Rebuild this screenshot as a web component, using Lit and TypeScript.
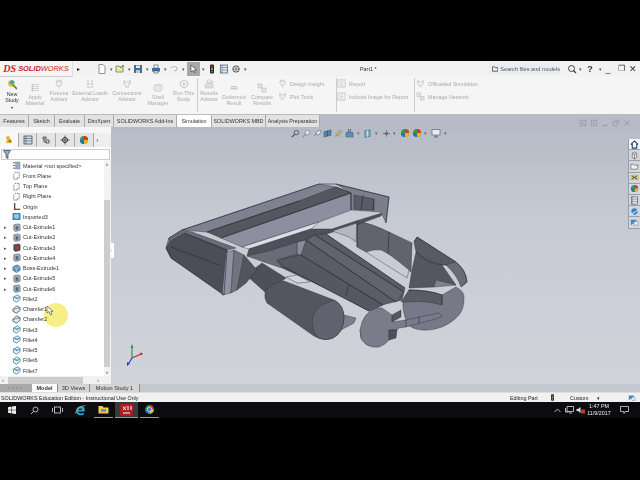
import { LitElement, html, css, svg } from 'lit';
import { customElement } from 'lit/decorators.js';

// small glyphs, all on a 10x10 box
const glyph: Record<string, any> = {
  plane: svg`<path d="M3 1.5h5v6H6M2 3v6h4V7" fill="none" stroke="#555" stroke-width=".8" stroke-dasharray="1.4 .6"/>`,
  origin: svg`<path d="M3 1v7h6" fill="none" stroke="#222" stroke-width="1.2"/><circle cx="3" cy="8" r="1" fill="#a33"/>`,
  material: svg`<path d="M1 2h3M1 5h3M1 8h3" stroke="#666"/><path d="M4 1h5v2H4zM4 4h5v2H4zM4 7h5v2H4z" fill="#8fb3c9" stroke="#667" stroke-width=".4"/>`,
  imported: svg`<rect x=".5" y="1" width="9" height="8" rx="1" fill="#3f84b5"/><path d="M2 3l3-1 3 1v3l-3 2-3-2z" fill="#9cc6de"/>`,
  cut: svg`<path d="M2 2l5-1 2 1v6l-5 1.5L2 8z" fill="#a9b4bd" stroke="#445" stroke-width=".6"/><path d="M4 3.5h3v4H4z" fill="#4b6a80"/>`,
  cutdark: svg`<path d="M2 2l5-1 2 1v6l-5 1.5L2 8z" fill="#555" stroke="#222" stroke-width=".6"/><path d="M4 3.5h3v4H4z" fill="#b33"/>`,
  boss: svg`<path d="M1 3l5-2 3 2v4l-4 2.5L1 7z" fill="#5e9dc2" stroke="#345" stroke-width=".6"/><path d="M1 3l4 2 4-2M5 5v4" stroke="#cfe3ee" stroke-width=".5" fill="none"/>`,
  fillet: svg`<path d="M1.5 3.5L6 1l3 2v3L5 9 1.5 7z" fill="#e9f2f6" stroke="#2f6d8c" stroke-width=".8"/><path d="M2 3.5L5.5 5.5 9 3" stroke="#2f6d8c" stroke-width=".6" fill="#7fb9d4"/>`,
  chamfer: svg`<path d="M1 5l4-4 4 2v3L5 9 1 7z" fill="#dfe9ee" stroke="#345" stroke-width=".8"/><path d="M1 5l4-1 4-1" stroke="#345" stroke-width=".6" fill="none"/>`,
  page: svg`<path d="M2 .5h4l2 2v7H2z" fill="#fff" stroke="#666" stroke-width=".7"/>`,
  open: svg`<path d="M1 8V2h3l1 1h3v5z" fill="#f0e5a8" stroke="#666" stroke-width=".7"/><path d="M5 4l3-3 1 2" stroke="#5a9a3a" fill="none"/>`,
  save: svg`<rect x="1" y="1" width="8" height="8" fill="#3f6f8f"/><rect x="3" y="1.5" width="4" height="2.5" fill="#dfe8ee"/><rect x="3" y="6" width="4" height="3" fill="#b8c8d2"/>`,
  print: svg`<rect x="3" y="1" width="4" height="3" fill="#fff" stroke="#444" stroke-width=".6"/><rect x="1" y="4" width="8" height="3.5" fill="#3f6f9f"/><rect x="3" y="7" width="4" height="2" fill="#fff" stroke="#444" stroke-width=".6"/>`,
  undo: svg`<path d="M2 4c2-2 5-2 6 0 .5 1.5-1 3-3 3" fill="none" stroke="#bbb" stroke-width="1.2"/>`,
  arrow: svg`<path d="M3 1v7l2-1.5L6.5 9l1-.5L6 6h2.5z" fill="#fff" stroke="#333" stroke-width=".6"/>`,
  light: svg`<rect x="3" y=".5" width="4" height="9" rx="1" fill="#222"/><circle cx="5" cy="2.5" r="1" fill="#d33"/><circle cx="5" cy="5" r="1" fill="#db3"/><circle cx="5" cy="7.5" r="1" fill="#3a3"/>`,
  sheet: svg`<rect x="1.5" y="1" width="7" height="8" fill="#dfe8ee" stroke="#456" stroke-width=".7"/><path d="M3 1v8M3 3.5h5.5M3 6h5.5" stroke="#456" stroke-width=".5"/>`,
  gear: svg`<circle cx="5" cy="5" r="3" fill="none" stroke="#444" stroke-width="1.2" stroke-dasharray="1.5 .4"/><circle cx="5" cy="5" r="1.2" fill="none" stroke="#444" stroke-width=".7"/>`,
  study: svg`<circle cx="4" cy="4" r="3" fill="#d9c43a"/><path d="M2 3l3-2 2 2-3 2z" fill="#3a9bd0"/><path d="M5 5l4 4" stroke="#5a8a2a" stroke-width="1.4"/>`,
  list: svg`<path d="M1 1.5h8M1 3.5h8M1 5.5h8M1 7.5h8M2.5 1v8" stroke="#bbb" stroke-width=".6" fill="none"/>`,
  pin: svg`<circle cx="5" cy="4" r="3" fill="none" stroke="#bbb" stroke-width=".8"/><path d="M5 7v2.5M3 3h4" stroke="#bbb" stroke-width=".7"/>`,
  load: svg`<path d="M3 1v5M7 1v5M1.5 8h7M2 4.5l1 1.5 1-1.5M6 4.5l1 1.5 1-1.5" stroke="#bbb" stroke-width=".8" fill="none"/>`,
  conn: svg`<path d="M2 1v4l2 1.5V9M8 1v4L6 6.5V9M2 3h6" stroke="#bbb" stroke-width=".8" fill="none"/>`,
  shell: svg`<ellipse cx="5" cy="3" rx="4" ry="1.8" fill="#ddd" stroke="#bbb" stroke-width=".5"/><path d="M1 3v4c1 2 7 2 8 0V3" fill="#e6e6e6" stroke="#bbb" stroke-width=".5"/>`,
  run: svg`<path d="M1 3l4-2 4 2-1 4-3 2-3-2z" fill="none" stroke="#bbb" stroke-width=".8"/><path d="M4 3l3 2-3 2z" fill="#ccc"/>`,
  result: svg`<path d="M1 6l3-3 2 2 3-3v7H1z" fill="#ddd" stroke="#bbb" stroke-width=".5"/><path d="M3 1h4v3H3z" fill="none" stroke="#bbb" stroke-width=".6"/>`,
  deform: svg`<path d="M1 4h8v3H1z" fill="#e4e4e4"/><path d="M2 3.5h6M2 5.5h6" stroke="#bbb" stroke-width=".7"/>`,
  compare: svg`<path d="M1 1h4v4H1zM5 5h4v4H5z" fill="#e4e4e4" stroke="#bbb" stroke-width=".6"/>`,
  report: svg`<rect x="1" y="1" width="8" height="8" fill="none" stroke="#bbb" stroke-width=".8"/><path d="M3 3h4M3 5h4M3 7h4" stroke="#bbb" stroke-width=".6"/>`,
  task: svg`<path d="M1 5l4-4 4 4M2.5 4.5V9h5V4.5" fill="none" stroke="#246" stroke-width="1.2"/>`,
  cube: svg`<path d="M2.5 2.5L5 1l2.5 1.5v5L5 9 2.5 7.5zM2.5 2.5L5 4l2.5-1.5M5 4v5" fill="#ddd" stroke="#555" stroke-width=".6"/>`,
  folder: svg`<path d="M1 8V2.5h3l1 1h4L8 8z" fill="#f4f4f4" stroke="#555" stroke-width=".7"/>`,
  xfer: svg`<rect x=".5" y="2" width="9" height="6" fill="#d8c77a"/><path d="M2 3l6 4M8 3L2 7" stroke="#345" stroke-width="1"/>`,
  color: svg`<circle cx="5" cy="5" r="4" fill="#3a9a3a"/><path d="M5 5V1a4 4 0 0 1 4 4z" fill="#d33"/><path d="M5 5h4a4 4 0 0 1-4 4z" fill="#e6b820"/><path d="M5 5v4a4 4 0 0 1-4-4z" fill="#2a6cc0"/>`,
  globe: svg`<circle cx="5" cy="5" r="3.5" fill="#3a86c8"/><path d="M1 7c3 1 6-3 8-4" stroke="#fff" stroke-width="1" fill="none"/>`,
  chat: svg`<path d="M1 2h6v4H3L1 8z" fill="#3a86c8"/><path d="M4 4h5v4H5z" fill="#e8eef4" stroke="#456" stroke-width=".4"/>`,
  props: svg`<path d="M2 8l1.5-4h3L8 8z" fill="#e8b52a"/><circle cx="4" cy="3" r="2" fill="#e8b52a"/><circle cx="6" cy="6" r="1.5" fill="#a57a10"/>`,
  tree: svg`<rect x="1" y="1" width="8" height="8" fill="#cfdde6" stroke="#345" stroke-width=".7"/><path d="M3 1v8M1 3.5h8M1 6h8" stroke="#345" stroke-width=".5"/>`,
  config: svg`<path d="M2 2h3v2H2zM5 5h3v3H5zM3 4v3h2" fill="none" stroke="#333" stroke-width=".8"/>`,
  target: svg`<circle cx="5" cy="5" r="2.5" fill="none" stroke="#222" stroke-width=".9"/><path d="M5 .5v9M.5 5h9" stroke="#222" stroke-width=".7"/>`,
  zoomfit: svg`<circle cx="6" cy="4" r="2.5" fill="none" stroke="#456" stroke-width="1"/><path d="M4 6L1 9" stroke="#456" stroke-width="1.4"/>`,
  zoomarea: svg`<circle cx="6" cy="4" r="2.5" fill="#dfe4ea" stroke="#789" stroke-width=".8"/><path d="M4 6L1 9" stroke="#789" stroke-width="1.2"/>`,
  prev: svg`<path d="M1 8l3-3M3 4l5-3 1 3-4 3z" fill="#e8ecf0" stroke="#567" stroke-width=".7"/>`,
  section: svg`<path d="M1 3l4-1v6L1 9zM5 2l4-1v6L5 8z" fill="#4d86a8" stroke="#345" stroke-width=".4"/>`,
  pencil: svg`<path d="M2 8l1-3 4-4 2 2-4 4z" fill="#d8b070" stroke="#665" stroke-width=".5"/><path d="M1 4l7 5" stroke="#9aa" stroke-width="1"/>`,
  boxes: svg`<path d="M1 4l4-1 4 1v5H1z" fill="#5d8fb3" stroke="#345" stroke-width=".4"/><path d="M4 0v4M6 0v3" stroke="#345" stroke-dasharray="1 .5"/>`,
  hide: svg`<path d="M2 2l6-1v7l-6 1.5z" fill="#7fb0cf" stroke="#345" stroke-width=".5"/><path d="M5 1.5V9" stroke="#fff" stroke-width=".6"/>`,
  appear: svg`<path d="M1 5h8M5 1.5v7" stroke="#556" stroke-width=".8"/><circle cx="5" cy="5" r="1.8" fill="#667"/>`,
  monitor: svg`<rect x="1" y="1.5" width="8" height="5.5" fill="#e8eaee" stroke="#667" stroke-width=".7"/><path d="M3 9h4M5 7v2" stroke="#667"/>`,
  vpin: svg`<rect x="1.5" y="1.5" width="7" height="7" fill="none" stroke="#8e939e" stroke-width=".8"/><path d="M4 3v4l2-2z" fill="#8e939e"/>`,
  vmin: svg`<path d="M2 8h6" stroke="#8e939e" stroke-width="1"/>`,
  vmax: svg`<path d="M3.5 1.5h5v5M1.5 3.5h5v5h-5z" fill="none" stroke="#8e939e" stroke-width=".8"/>`,
  vclose: svg`<path d="M2 2l6 6M8 2l-6 6" stroke="#8e939e" stroke-width=".9"/>`,
};

const icon = (name: string, size = 10) =>
  html`<svg width=${size} height=${size} viewBox="0 0 10 10">${glyph[name]}</svg>`;

@customElement('feature-tree')
class FeatureTree extends LitElement {
  static styles = css`
    :host { display: flex; flex-direction: column; width: 111px; background: #fff; flex: none; height: 100%; position: relative; }
    .handle { height: 6px; background: #f6f6f6; }
    .tabs { height: 14px; display: flex; background: #eee; padding-right: 10px; }
    .tabs div { width: 19px; display: flex; align-items: center; justify-content: center; border-right: 1px solid #aaa; background: #e4e4e4; }
    .tabs div.on { background: #f8f8f8; }
    .tabs .more { margin-left: auto; border: none; background: none; color: #666; font-size: 8px; width: 8px; }
    .filter { margin: 2px 1px 0; height: 11px; border: 1px solid #ccc; display: flex; align-items: center; padding-left: 1px; box-sizing: border-box; }
    .body { flex: 1; display: flex; min-height: 0; }
    .rows { flex: 1; padding-top: .5px; overflow: hidden; }
    .row { height: 10.25px; display: flex; align-items: center; gap: 2px; font: 5.5px "Liberation Sans", sans-serif; color: #333; white-space: nowrap; }
    .exp { width: 10px; flex: none; color: #555; font-size: 5px; text-align: center; }
    .track { width: 7px; background: #f3f3f3; position: relative; }
    .thumb { position: absolute; left: 0; width: 6px; top: 40px; height: 167px; background: #cdcdcd; }
    .up, .down { position: absolute; left: 0; width: 6px; text-align: center; font: 5px/6px "Liberation Sans", sans-serif; color: #555; }
    .up { top: 2px; }
    .down { bottom: 0; }
    .hbar { height: 8px; display: flex; align-items: center; background: #f1f1f1; font: 6px "Liberation Sans", sans-serif; color: #555; padding-left: 2px; }
    .hthumb { width: 75px; height: 7px; background: #cdcdcd; margin: 0 14px 0 4px; }
  `;
  rows: [string, string, boolean][] = [
    ['Material <not specified>', 'material', false],
    ['Front Plane', 'plane', false],
    ['Top Plane', 'plane', false],
    ['Right Plane', 'plane', false],
    ['Origin', 'origin', false],
    ['Imported3', 'imported', false],
    ['Cut-Extrude1', 'cut', true],
    ['Cut-Extrude2', 'cut', true],
    ['Cut-Extrude3', 'cutdark', true],
    ['Cut-Extrude4', 'cut', true],
    ['Boss-Extrude1', 'boss', true],
    ['Cut-Extrude5', 'cut', true],
    ['Cut-Extrude6', 'cut', true],
    ['Fillet2', 'fillet', false],
    ['Chamfer1', 'chamfer', false],
    ['Chamfer2', 'chamfer', false],
    ['Fillet3', 'fillet', false],
    ['Fillet4', 'fillet', false],
    ['Fillet5', 'fillet', false],
    ['Fillet6', 'fillet', false],
    ['Fillet7', 'fillet', false],
  ];
  render() {
    return html`
      <div class="handle"></div>
      <div class="tabs">
        <div class="on">${icon('props', 10)}</div>
        <div>${icon('tree', 10)}</div>
        <div>${icon('config', 10)}</div>
        <div>${icon('target', 10)}</div>
        <div>${icon('color', 10)}</div>
        <div class="more">›</div>
      </div>
      <div class="filter"><svg width="8" height="9" viewBox="0 0 8 9"><path d="M.5.5h7L5 4.5V8.500L3 7.500v-3z" fill="#7fb6d0" stroke="#345" stroke-width=".7"/></svg></div>
      <div class="body">
        <div class="rows">
          ${this.rows.map(([label, kind, exp]) => html`
            <div class="row"><span class="exp">${exp ? '▸' : ''}</span>${icon(kind, 9)}<span>${label}</span></div>`)}
        </div>
        <div class="track">
          <div class="up">˄</div>
          <div class="thumb"></div>
          <div class="down">˅</div>
        </div>
      </div>
      <div class="hbar">‹<div class="hthumb"></div>›</div>
    `;
  }
}

// viewBox is screen pixels, so the faces read straight off the reference
@customElement('part-model')
class PartModel extends LitElement {
  static styles = css`
    :host { position: absolute; left: 0; top: 0; pointer-events: none; }
    svg { display: block; filter: blur(.3px); }
    .l { stroke: #2a2a30; stroke-width: .6; fill: none; }
  `;
  faces: [string, string][] = [
    // right arm and its rounded end, furthest back
    ['M358 221 Q375 224 390 232 L413 243 L412 272 L390 254 Q378 249 367 252 L358 247Z', '#62636e'],
    ['M418 237 L457 262 L447 265 Q430 265 417 252 L415 242Z', '#585963'],
    ['M413 270 L417 252 Q430 265 443 265 L457 285 L437 280 L435 287 L410 288Z', '#555660'],
    ['M447 265 L457 262 Q467 270 468 282 L462 287 Q458 275 447 265Z', '#6a6b78'],
    ['M437 280 L457 285 L435 287Z', '#80828f'],
    // opening between arm and ribs
    ['M367 252 Q375 249 382 250 Q390 253 410 270 L408 278Z', '#c9ccd5'],
    // rail and window
    ['M183 230 L320 184 L337 187 L300 201 L208 232Z', '#7f8090'],
    ['M208 232 L300 201 L337 187 L352 193 L222 238Z', '#55565f'],
    ['M222 238 L352 193 L352 210 L320 222 L243 247Z', '#8d8fa0'],
    ['M243 247 L320 222 L312 229 L250 249Z', '#dcdee4'],
    // far end block
    ['M337 184 L390 197 L387 223 L382 212 L352 210 L352 193Z', '#7c7e8d'],
    ['M355 195 L375 199 L375 210 L355 209Z', '#5a5b66'],
    // bar under the window, pale wedge
    ['M250 249 L312 229 L333 229 L357 221 L383 213 L382 216 L360 224 L334 232 L298 243 L270 251 L248 256Z', '#4f505a'],
    ['M333 231 L358 223 L357 242 L350 237Z', '#b4b6c0'],
    // ribs
    ['M278 260 L298 254 L298 242 L307 240 L315 235 L327 234 L406 288 L403 300 L383 305 L370 311 L342 295 L283 268Z', '#5b5c67'],
    ['M307 240 L316 235 L405 292 L397 302Z', '#62636f'],
    ['M278 260 L302 255 L384 305 L370 311 L285 267Z', '#565762'],
    ['M298 242 L307 240 L302 255 L298 254Z', '#8a8c9b'],
    // junction behind the block
    ['M248 256 L270 251 L298 242 L298 254 L278 260 L283 268 L265 262 Z', '#6a6b79'],
    ['M247 275 L263 263 L287 278 L267 293Z', '#4e4f59'],
    ['M287 277 L298 275 L311 282 L298 283Z', '#d2d5dc'],
    // left block
    ['M170 242 L185 233 L228 250 L225 295 L172 258 L167 248Z', '#4c4d56'],
    ['M170 238 L183 230 L193 232 L237 248 L228 250 L185 233 L170 242Z', '#6a6b77'],
    ['M227 252 L235 250 L232 293 L223 295Z', '#9092a4'],
    ['M235 250 L245 255 L238 290 L232 293Z', '#72737f'],
    ['M245 255 L258 270 L247 283 L238 290Z', '#53545e'],
    // cylinder and its tab
    ['M345 315 L357 318 L355 323 L342 330Z', '#7d7f8e'],
    ['M268 303 Q262 292 272 286 Q278 281 285 281 L335 300 Q345 305 345 318 Q344 333 334 338 Q325 342 315 336Z', '#54555f'],
    ['M327 303 Q314 308 313 322 Q314 334 320 338 Q327 341 334 338 Q344 333 345 318 Q345 305 335 300Z', '#616270'],
    // rear disc
    ['M410 290 L443 295 L457 287 Q466 292 465 298 Q465 309 460 315 Q453 323 443 327 Q433 331 423 330 Q412 329 408 323 Q403 310 404 302Z', '#777989'],
    ['M410 290 Q430 290 443 295 L443 305 Q425 300 410 302 L402 302Z', '#5a5b66'],
    // front disc and slot
    ['M361 330 L362 338 L368 345 L366 338Z', '#4d4e58'],
    ['M363 322 Q366 314 373 310 Q378 307 383 308 L393 315 L393 322 L407 320 L440 313 L443 317 L407 327 L400 328 L398 330 L390 330 L390 340 Q386 345 380 347 Q373 348 368 345 Q362 340 362 338 L361 330Z', '#7a7c8a'],
    ['M393 315 L402 310 L402 317 L393 322Z', '#555660'],
    ['M390 330 L398 330 L397 338 L390 340Z', '#4f505a'],
  ];
  lines = [
    'M183 230 L320 184 L337 184 L390 197 L387 223',
    'M208 232 L300 201M222 238 L352 193 L352 210',
    'M352 193 L337 187M364 195 L362 210M375 199 L374 211',
    'M390 232 L389 254M358 221 L358 247',
    'M415 242 L418 237 L457 262 Q467 270 468 282 L462 287',
    'M417 252 Q430 265 447 265',
    'M307 240 L397 302M316 235 L405 292M327 234 L406 288M302 255 L384 305M285 267 L370 311',
    'M350 284 L347 296',
    'M185 233 L228 250 L225 295 L172 258 L167 248 L170 238 L183 230',
    'M172 247 L220 265',
    'M410 290 Q430 290 443 295 L443 305',
    'M407 320 L407 327M420 317 L420 323',
  ];
  render() {
    return html`
      <svg width="528" height="257" viewBox="112 127 528 257">
        ${this.faces.map(([d, fill]) => svg`<path d=${d} fill=${fill} stroke="#2c2c33" stroke-width=".4" stroke-linejoin="round"></path>`)}
        ${this.lines.map(d => svg`<path class="l" d=${d}></path>`)}
      </svg>
    `;
  }
}

@customElement('app-root')
class AppRoot extends LitElement {
  static styles = css`
    :host { display: block; position: relative; width: 640px; height: 480px; background: #000; overflow: hidden; font-family: "Liberation Sans", sans-serif; }
    .window { margin-top: 61px; position: absolute; top: 0; left: 0; width: 640px; height: 357px; display: flex; flex-direction: column; }
    .title { height: 15px; background: #f2f2f2; display: flex; align-items: center; flex: none; position: relative; }
    .logo { width: 73px; height: 16px; background: #f8f4f2; border-right: 1px solid #ddd; border-bottom: 1px solid #ccc; box-sizing: border-box; display: flex; align-items: center; justify-content: center; color: #c8202a; font: italic bold 7.4px "Liberation Sans", sans-serif; gap: 2px; position: relative; z-index: 1; }
    .logo b { font: italic bold 10px "Liberation Serif", serif; }
    .logo i { font-weight: normal; }
    .tools { display: flex; align-items: center; margin-left: 1px; }
    .tb { width: 11px; display: flex; justify-content: center; }
    .dd { width: 7px; font-size: 5px; color: #555; text-align: center; }
    .sel { background: #a8a8a8; height: 14px; display: flex; align-items: center; width: 13px; justify-content: center; }
    .doc { position: absolute; left: 360px; font-size: 5.4px; color: #333; }
    .search { position: absolute; left: 489px; width: 71px; height: 11px; top: 2px; background: #e9edf1; font-size: 5.6px; color: #555; display: flex; align-items: center; gap: 2px; padding-left: 3px; box-sizing: border-box; white-space: nowrap; }
    .wctl { position: absolute; left: 567px; display: flex; align-items: center; color: #333; font-size: 9px; }
    .ribbon { height: 39px; background: #f5f5f5; display: flex; flex: none; border-bottom: 1px solid #bbb; box-sizing: border-box; }
    .rb { display: flex; flex-direction: column; align-items: center; font-size: 5.3px; line-height: 6.4px; color: #aaa; text-align: center; padding-top: 3px; box-sizing: border-box; flex: none; white-space: nowrap; }
    .rb.low { padding-top: 7px; }
    .rb.act { color: #333; }
    .rb span { display: block; margin-top: 1px; }
    .sep { width: 1px; background: #ccc; margin: 2px 0; flex: none; }
    .rc { display: flex; flex-direction: column; gap: 4px; padding-top: 3px; flex: none; font-size: 5.4px; color: #aaa; box-sizing: border-box; }
    .rc div { display: flex; align-items: center; gap: 3px; height: 9px; white-space: nowrap; }
    .tabs { height: 12px; background: #e6e6e6; display: flex; flex: none; font-size: 5.4px; color: #333; }
    .tab { display: flex; align-items: center; justify-content: center; border-right: 1px solid #aaa; box-sizing: border-box; white-space: nowrap; background: #e2e2e2; }
    .tab.on { background: #fff; }
    .rest { flex: 1; background: #b6bbc7; display: flex; align-items: flex-end; justify-content: flex-end; gap: 3px; padding: 0 9px 0 0; }
    .main { height: 257px; display: flex; flex: none; }
    .view { flex: 1; background: linear-gradient(#b6bbc7, #c6cad3 35%, #d0d3da); position: relative; overflow: hidden; }
    .grip { position: absolute; left: 0; top: 116px; width: 3px; height: 15px; background: #fff; color: #888; font-size: 4px; line-height: 15px; }
    .hud { position: absolute; left: 180px; top: 1px; display: flex; align-items: center; height: 10px; color: #667; font-size: 5px; }
    .hud svg { margin-right: 1.8px; }
    .hud .d { margin: 0 3.5px 0 1px; }
    .pane { position: absolute; right: 0; top: 12px; width: 12px; display: flex; flex-direction: column; }
    .pane div { height: 11.2px; background: #d3d6dc; border: 1px solid #98a0a8; border-right: none; border-top: none; box-sizing: border-box; display: flex; align-items: center; justify-content: center; }
    .pane div.on { background: #f6f6f6; }
    .triad { position: absolute; left: 16px; top: 217px; }
    .bottomtabs { height: 8px; display: flex; background: #c4c8d1; flex: none; font-size: 5.6px; color: #333; }
    .nav { width: 32px; background: #a9a9a9; color: #888; font-size: 4px; line-height: 8px; letter-spacing: 2px; text-align: center; }
    .bt { display: flex; align-items: center; justify-content: center; background: #d4d4d4; border-right: 1px solid #888; box-sizing: border-box; }
    .bt.on { background: #fff; font-weight: bold; }
    .status { height: 10px; background: #f1f1f1; display: flex; align-items: center; flex: none; font-size: 5.4px; color: #222; padding-left: 1px; position: relative; border-top: 1px solid #ddd; box-sizing: border-box; }
    .status .it { position: absolute; white-space: nowrap; display: flex; align-items: center; }
    .task { height: 16px; background: #0c0c0e; display: flex; align-items: center; flex: none; position: relative; }
    .ti { position: absolute; top: 0; height: 16px; display: flex; align-items: center; justify-content: center; box-sizing: border-box; }
    .ti.run { border-bottom: 1px solid #6aa8d8; }
    .ti.active { background: #3a3a3c; }
    .clock { position: absolute; left: 584px; width: 30px; color: #eee; font-size: 5.4px; line-height: 7.5px; text-align: center; }
    .hi { position: absolute; left: 44px; top: 303px; width: 24px; height: 24px; border-radius: 50%; background: #f6ee86; mix-blend-mode: multiply; }
    .cur { position: absolute; left: 46px; top: 305px; }
  `;
  render() {
    const tabs: [string, number][] = [
      ['Features', 29], ['Sketch', 26], ['Evaluate', 30], ['DimXpert', 29],
      ['SOLIDWORKS Add-Ins', 63], ['Simulation', 35], ['SOLIDWORKS MBD', 54], ['Analysis Preparation', 54],
    ];
    const big: [string, string, string, number, boolean][] = [
      ['Apply', 'Material', 'list', 22, true], ['Fixtures', 'Advisor', 'pin', 26, false],
      ['External Loads', 'Advisor', 'load', 36, false], ['Connections', 'Advisor', 'conn', 38, false],
      ['Shell', 'Manager', 'shell', 24, true], ['Run This', 'Study', 'run', 27, false],
    ];
    const res: [string, string, string, number, boolean][] = [
      ['Results', 'Advisor', 'result', 22, false], ['Deformed', 'Result', 'deform', 28, true], ['Compare', 'Results', 'compare', 28, true],
    ];
    const item = ([a, b, ic, w, low]: [string, string, string, number, boolean]) =>
      html`<div class="rb ${low ? 'low' : ''}" style="width:${w}px">${icon(ic, 10)}<span>${a}<br>${b}</span></div>`;
    return html`
      <div class="window">
        <div class="title">
          <div class="logo"><b>DS</b><span>SOLID<i>WORKS</i></span></div>
          <div class="tools">
            <span style="font-size:6px;color:#222;width:8px;text-align:center">▸</span>
            <span style="width:14.5px"></span>
            <div class="tb">${icon('page')}</div><div class="dd">▾</div>
            <div class="tb">${icon('open')}</div><div class="dd">▾</div>
            <div class="tb">${icon('save')}</div><div class="dd">▾</div>
            <div class="tb">${icon('print')}</div><div class="dd">▾</div>
            <div class="tb">${icon('undo')}</div><div class="dd">▾</div>
            <div class="sel">${icon('arrow')}</div><div class="dd">▾</div>
            <div class="tb">${icon('light')}</div>
            <div class="tb" style="margin-left:1px">${icon('sheet')}</div>
            <div class="tb" style="margin-left:1px">${icon('gear')}</div><div class="dd">▾</div>
          </div>
          <div class="doc">Part1 *</div>
          <div class="search">
            <svg width="7" height="6" viewBox="0 0 7 6"><path d="M.5.5h2l1 1h3v4h-6z" fill="#eee" stroke="#333" stroke-width=".8"/></svg>
            <span>Search files and models</span>
          </div>
          <div class="wctl">
            <svg width="10" height="10" viewBox="0 0 10 10"><circle cx="4.5" cy="4.5" r="3" fill="none" stroke="#345" stroke-width="1"/><path d="M6.5 6.5 9 9" stroke="#345" stroke-width="1.2"/></svg>
            <span class="dd" style="width:6px">▾</span>
            <span style="width:14px;text-align:center;font-weight:bold">?</span>
            <span class="dd" style="width:6px">▾</span>
            <span style="width:10px;text-align:center">_</span>
            <span style="width:16px;text-align:center;font-size:8px">❐</span>
            <span style="width:8px;text-align:center">✕</span>
          </div>
        </div>
        <div class="ribbon">
          <div class="rb act" style="width:24px">${icon('study', 11)}<span>New<br>Study</span><span style="font-size:4px">▾</span></div>
          ${big.map(item)}
          <div class="sep"></div>
          ${res.map(item)}
          <div class="rc" style="width:60px;padding-left:2px">
            <div>${icon('pin', 9)}Design Insight</div>
            <div>${icon('conn', 9)}Plot Tools</div>
          </div>
          <div class="sep"></div>
          <div class="rc" style="width:77px">
            <div>${icon('report', 9)}Report</div>
            <div>${icon('report', 9)}Include Image for Report</div>
          </div>
          <div class="sep"></div>
          <div class="rc" style="flex:1;padding-left:1px">
            <div>${icon('conn', 9)}Offloaded Simulation</div>
            <div>${icon('compare', 9)}Manage Network</div>
          </div>
        </div>
        <div class="tabs">
          ${tabs.map(([t, w]) => html`<div class="tab ${t === 'Simulation' ? 'on' : ''}" style="width:${w}px">${t}</div>`)}
          <div class="rest">${icon('vpin', 8)}${icon('vpin', 8)}${icon('vmin', 8)}${icon('vmax', 8)}${icon('vclose', 8)}</div>
        </div>
        <div class="main">
          <feature-tree></feature-tree>
          <div class="view">
            <part-model></part-model>
            <div class="grip">‹</div>
            <div class="hud">
              ${icon('zoomfit', 9)}${icon('zoomarea', 9)}${icon('prev', 9)}${icon('section', 9)}${icon('pencil', 9)}${icon('boxes', 9)}<span class="d">▾</span>
              ${icon('hide', 9)}<span class="d">▾</span>
              ${icon('appear', 9)}<span class="d">▾</span>
              ${icon('color', 10)}${icon('color', 10)}<span class="d">▾</span>
              ${icon('monitor', 10)}<span class="d">▾</span>
            </div>
            <div class="pane">
              <div class="on">${icon('task', 9)}</div>
              <div>${icon('cube', 9)}</div>
              <div>${icon('folder', 9)}</div>
              <div>${icon('xfer', 9)}</div>
              <div>${icon('color', 9)}</div>
              <div>${icon('sheet', 9)}</div>
              <div>${icon('globe', 9)}</div>
              <div>${icon('chat', 9)}</div>
            </div>
            <div class="triad">
              <svg width="16" height="22" viewBox="0 0 16 22">
                <path d="M5 14V2" stroke="#2f9a3a" stroke-width="1.2"/><path d="M3.5 4 5 0l1.5 4z" fill="#2f9a3a"/>
                <path d="M5 14 14 10" stroke="#c62a2a" stroke-width="1.2"/><path d="M13 8.5l3 .8-2 2.5z" fill="#c62a2a"/>
                <path d="M5 14 2 19" stroke="#2a3ac6" stroke-width="1.2"/><path d="M0 18l3 1.5-3 2.5z" fill="#2a3ac6"/>
              </svg>
            </div>
          </div>
        </div>
        <div class="bottomtabs">
          <div class="nav">◂◂▸▸</div>
          <div class="bt on" style="width:26px">Model</div>
          <div class="bt" style="width:32px">3D Views</div>
          <div class="bt" style="width:50px">Motion Study 1</div>
        </div>
        <div class="status">
          SOLIDWORKS Education Edition - Instructional Use Only
          <span class="it" style="left:510px">Editing Part</span>
          <span class="it" style="left:549px">${icon('light', 7)}</span>
          <span class="it" style="left:570px">Custom</span>
          <span class="it" style="left:597px;font-size:5px">▾</span>
          <span class="it" style="left:628px">${icon('chat', 8)}</span>
        </div>
        <div class="task">
          <div class="ti" style="left:0;width:24px">
            <svg width="8" height="8" viewBox="0 0 8 8"><path d="M0 1.2 3.5.6V3.7H0zM4 .5 8 0V3.7H4zM0 4.2H3.5V7.4L0 6.8zM4 4.2H8V8L4 7.5z" fill="#eee"/></svg>
          </div>
          <div class="ti" style="left:24px;width:20px">
            <svg width="9" height="9" viewBox="0 0 9 9"><circle cx="5.5" cy="3.5" r="2.5" fill="none" stroke="#ddd" stroke-width=".8"/><path d="M3.7 5.3 1 8" stroke="#ddd" stroke-width=".9"/></svg>
          </div>
          <div class="ti" style="left:47px;width:20px">
            <svg width="11" height="8" viewBox="0 0 11 8"><rect x="2.5" y="1" width="6" height="6" fill="none" stroke="#ddd" stroke-width=".8"/><path d="M.5 2v4M10.5 2v4" stroke="#ddd" stroke-width=".8"/></svg>
          </div>
          <div class="ti" style="left:70px;width:20px">
            <svg width="11" height="11" viewBox="0 0 11 11"><path d="M9.5 6.5H3.2c.2 2 3 2.6 5.5 1.2v2C5 11.2 1 9.5 1 6c0-3 2.2-4.8 5-5 2.5 0 4.3 1.5 3.5 5.5zM3.2 4.8h4C7 3 3.700 3 3.2 4.8z" fill="#2f9fe0"/><path d="M0 9C2 3 7 .5 10.5.5" stroke="#e8b820" stroke-width=".6" fill="none"/></svg>
          </div>
          <div class="ti run" style="left:94px;width:19px">
            <svg width="11" height="9" viewBox="0 0 11 9"><path d="M.5 1h4l1 1.5h5V8.500H.5z" fill="#f2cc5a"/><rect x="3" y="4" width="5" height="3" fill="#4aa0d8"/></svg>
          </div>
          <div class="ti run active" style="left:115px;width:23px">
            <svg width="13" height="12" viewBox="0 0 13 12"><rect width="13" height="12" rx="2" fill="#b01c22"/><path d="M3 2.5 6 6M6 2.5 3 6M8 2v4M11 2v4" stroke="#fff" stroke-width="1"/><path d="M3 9h7" stroke="#ddd" stroke-width="1.2"/></svg>
          </div>
          <div class="ti run" style="left:140px;width:19px">
            <svg width="11" height="11" viewBox="0 0 10 10">${glyph.color}<circle cx="5" cy="5" r="2" fill="#3a7ae0" stroke="#fff" stroke-width=".6"/></svg>
          </div>
          <div class="ti" style="left:553px;width:9px">
            <svg width="7" height="5" viewBox="0 0 7 5"><path d="M.5 4 3.5 1 6.5 4" fill="none" stroke="#ddd" stroke-width=".8"/></svg>
          </div>
          <div class="ti" style="left:564px;width:10px">
            <svg width="9" height="8" viewBox="0 0 9 8"><path d="M2 .5h6.5v5H2zM.5 2v4h3M4 7h3" fill="none" stroke="#ddd" stroke-width=".8"/></svg>
          </div>
          <div class="ti" style="left:575px;width:10px">
            <svg width="9" height="8" viewBox="0 0 9 8"><path d="M.5 3H2L4.5 1V7L2 5H.5z" fill="#ddd"/><rect x="5" y="3.5" width="4" height="4" fill="#d43030"/></svg>
          </div>
          <div class="clock">1:47 PM<br>11/9/2017</div>
          <div class="ti" style="left:619px;width:10px">
            <svg width="9" height="8" viewBox="0 0 9 8"><path d="M.5.5h8v5H5L4 7.5 3.5 5.5h-3z" fill="none" stroke="#eee" stroke-width=".7"/></svg>
          </div>
        </div>
      </div>
      <div class="hi"></div>
      <svg class="cur" width="9" height="11" viewBox="0 0 9 11"><path d="M1 1v7l2-1.5L4.5 10 6 9.300 4.800 6.500H7z" fill="#fff" stroke="#555" stroke-width=".7"/></svg>
    `;
  }
}
